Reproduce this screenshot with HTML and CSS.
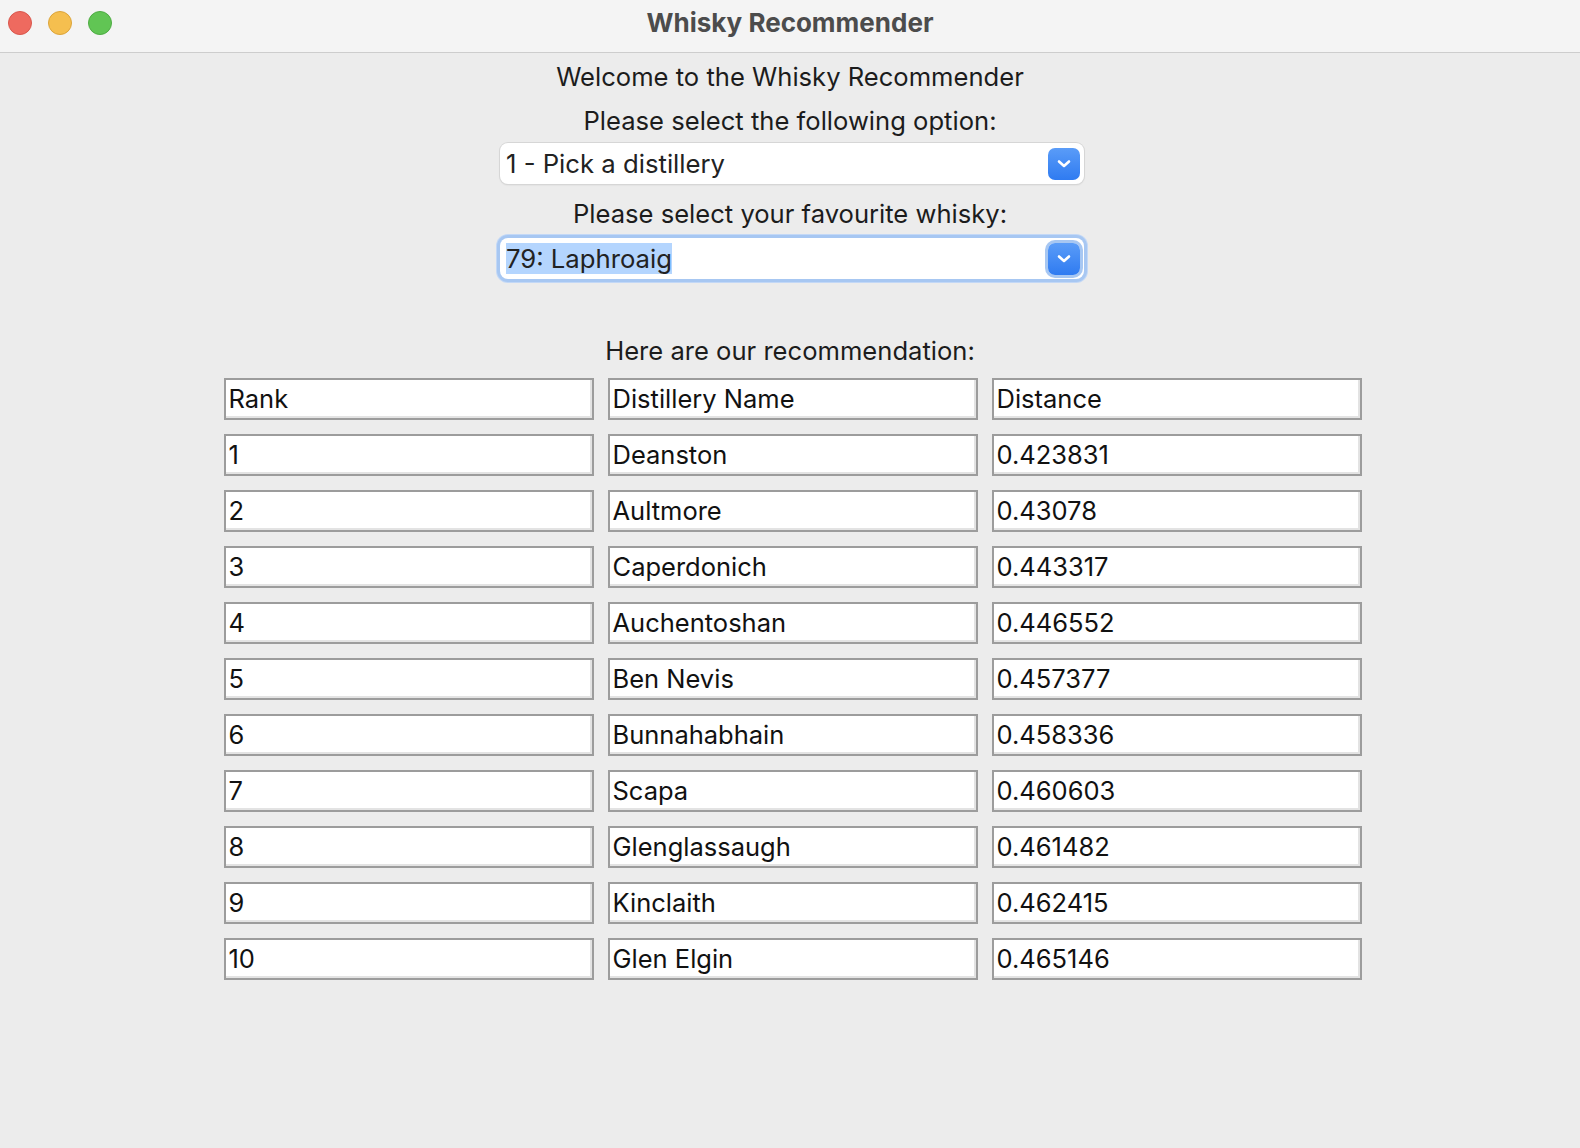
FILE: index.html
```html
<!DOCTYPE html>
<html>
<head>
<meta charset="utf-8">
<title>Whisky Recommender</title>
<link rel="stylesheet" href="styles.css">
</head>
<body>
<div class="window">
  <header class="titlebar">
    <div class="lights">
      <span class="light red"></span>
      <span class="light yellow"></span>
      <span class="light green"></span>
    </div>
    <div class="title">Whisky Recommender</div>
  </header>
  <main class="content">
    <div class="label first">Welcome to the Whisky Recommender</div>
    <div class="label">Please select the following option:</div>
    <div class="combo">
      <span class="combo-text">1 - Pick a distillery</span>
      <span class="combo-btn"><svg width="16" height="10" viewBox="0 0 16 10"><path d="M3 2.5 L8 7 L13 2.5" fill="none" stroke="#fff" stroke-width="2.6" stroke-linecap="round" stroke-linejoin="round"/></svg></span>
    </div>
    <div class="label second">Please select your favourite whisky:</div>
    <div class="combo focused">
      <span class="combo-text"><span class="sel">79: Laphroaig</span></span>
      <span class="combo-btn"><svg width="16" height="10" viewBox="0 0 16 10"><path d="M3 2.5 L8 7 L13 2.5" fill="none" stroke="#fff" stroke-width="2.6" stroke-linecap="round" stroke-linejoin="round"/></svg></span>
    </div>
    <div class="label rec">Here are our recommendation:</div>
    <div class="table">
      <div class="cell">Rank</div><div class="cell">Distillery Name</div><div class="cell">Distance</div>
      <div class="cell">1</div><div class="cell">Deanston</div><div class="cell">0.423831</div>
      <div class="cell">2</div><div class="cell">Aultmore</div><div class="cell">0.43078</div>
      <div class="cell">3</div><div class="cell">Caperdonich</div><div class="cell">0.443317</div>
      <div class="cell">4</div><div class="cell">Auchentoshan</div><div class="cell">0.446552</div>
      <div class="cell">5</div><div class="cell">Ben Nevis</div><div class="cell">0.457377</div>
      <div class="cell">6</div><div class="cell">Bunnahabhain</div><div class="cell">0.458336</div>
      <div class="cell">7</div><div class="cell">Scapa</div><div class="cell">0.460603</div>
      <div class="cell">8</div><div class="cell">Glenglassaugh</div><div class="cell">0.461482</div>
      <div class="cell">9</div><div class="cell">Kinclaith</div><div class="cell">0.462415</div>
      <div class="cell">10</div><div class="cell">Glen Elgin</div><div class="cell">0.465146</div>
    </div>
  </main>
</div>
</body>
</html>
```
FILE: styles.css
```css
* { box-sizing: border-box; }
html, body { margin: 0; padding: 0; }
body {
  width: 1580px;
  height: 1148px;
  background: #ececec;
  font-family: Inter, "Noto Sans", sans-serif;
  color: #1c1c1c;
  overflow: hidden;
}
.window { height: 100%; display: flex; flex-direction: column; }
.titlebar {
  height: 53px;
  background: #f4f4f4;
  border-bottom: 1px solid #cdcdcd;
  display: flex;
  align-items: center;
  justify-content: center;
  position: relative;
}
.lights {
  position: absolute;
  left: 8px;
  top: 11px;
  display: flex;
  gap: 16px;
}
.light {
  width: 24px; height: 24px; border-radius: 50%;
  display: block;
}
.red { background: #ee6a5f; border: 1px solid #d9564c; }
.yellow { background: #f5bf4f; border: 1px solid #dca43a; }
.green { background: #61c554; border: 1px solid #4eac43; }
.title {
  font-weight: 700;
  font-size: 26px;
  color: #4c4c4c;
  margin-top: -7px;
}
.content {
  display: flex;
  flex-direction: column;
  align-items: center;
}
.label {
  font-size: 25.6px;
  height: 44px;
  line-height: 44px;
  text-align: center;
}
.label.first { margin-top: 2px; }
.label.second { margin-top: 8px; }
.label.rec { margin-top: 50px; margin-bottom: 5px; }
.combo {
  width: 584px;
  height: 41px;
  margin-left: 4px;
  background: #fff;
  border-radius: 8px;
  box-shadow: 0 0 0 1px #d6d6d6, 0 1px 2px rgba(0,0,0,0.12);
  display: flex;
  align-items: center;
  justify-content: space-between;
  padding: 0 4px 0 6px;
  font-size: 25.7px;
}
.combo.focused {
  margin-top: 2px;
  box-shadow: 0 0 0 3px #a7c7f2, 0 0 0 4px #c3d8f6;
}
.combo-text { color: #222; }
.sel { background: #b4d5fe; }
.combo-btn {
  width: 32px; height: 32px;
  border-radius: 7px;
  background: linear-gradient(#5a9cf8, #2f7bf1);
  display: flex;
  align-items: center;
  justify-content: center;
}
.combo.focused .combo-btn { box-shadow: 0 0 0 3px #a7c7f2; }
.table {
  display: grid;
  grid-template-columns: repeat(3, 370px);
  grid-auto-rows: 42px;
  column-gap: 14px;
  row-gap: 14px;
  margin-left: 5px;
}
.cell {
  background: #fff;
  border: 2px solid #9c9c9c;
  box-shadow: inset -2px -2px 0 #e3e3e3;
  font-size: 25.5px;
  line-height: 38px;
  padding-left: 3px;
  color: #111;
  white-space: nowrap;
  overflow: hidden;
}
```
